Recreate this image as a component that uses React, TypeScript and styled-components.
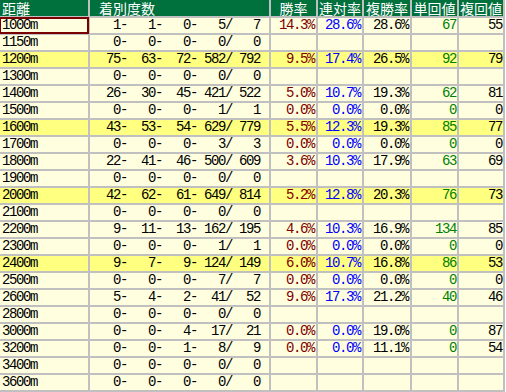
import { Fragment } from "react";
import styled, { createGlobalStyle } from "styled-components";

const GlobalStyle = createGlobalStyle`
  body {
    margin: 0;
    background: #fff;
  }
`;

type Row = {
  dist: string;
  counts: number[];
  rates?: [string, string, string, number, number];
  hl?: boolean;
};

const rows: Row[] = [
  { dist: "1000m", counts: [1, 1, 0, 5, 7], rates: ["14.3%", "28.6%", "28.6%", 67, 55] },
  { dist: "1150m", counts: [0, 0, 0, 0, 0] },
  { dist: "1200m", counts: [75, 63, 72, 582, 792], rates: ["9.5%", "17.4%", "26.5%", 92, 79], hl: true },
  { dist: "1300m", counts: [0, 0, 0, 0, 0] },
  { dist: "1400m", counts: [26, 30, 45, 421, 522], rates: ["5.0%", "10.7%", "19.3%", 62, 81] },
  { dist: "1500m", counts: [0, 0, 0, 1, 1], rates: ["0.0%", "0.0%", "0.0%", 0, 0] },
  { dist: "1600m", counts: [43, 53, 54, 629, 779], rates: ["5.5%", "12.3%", "19.3%", 85, 77], hl: true },
  { dist: "1700m", counts: [0, 0, 0, 3, 3], rates: ["0.0%", "0.0%", "0.0%", 0, 0] },
  { dist: "1800m", counts: [22, 41, 46, 500, 609], rates: ["3.6%", "10.3%", "17.9%", 63, 69] },
  { dist: "1900m", counts: [0, 0, 0, 0, 0] },
  { dist: "2000m", counts: [42, 62, 61, 649, 814], rates: ["5.2%", "12.8%", "20.3%", 76, 73], hl: true },
  { dist: "2100m", counts: [0, 0, 0, 0, 0] },
  { dist: "2200m", counts: [9, 11, 13, 162, 195], rates: ["4.6%", "10.3%", "16.9%", 134, 85] },
  { dist: "2300m", counts: [0, 0, 0, 1, 1], rates: ["0.0%", "0.0%", "0.0%", 0, 0] },
  { dist: "2400m", counts: [9, 7, 9, 124, 149], rates: ["6.0%", "10.7%", "16.8%", 86, 53], hl: true },
  { dist: "2500m", counts: [0, 0, 0, 7, 7], rates: ["0.0%", "0.0%", "0.0%", 0, 0] },
  { dist: "2600m", counts: [5, 4, 2, 41, 52], rates: ["9.6%", "17.3%", "21.2%", 40, 46] },
  { dist: "2800m", counts: [0, 0, 0, 0, 0] },
  { dist: "3000m", counts: [0, 0, 4, 17, 21], rates: ["0.0%", "0.0%", "19.0%", 0, 87] },
  { dist: "3200m", counts: [0, 0, 1, 8, 9], rates: ["0.0%", "0.0%", "11.1%", 0, 54] },
  { dist: "3400m", counts: [0, 0, 0, 0, 0] },
  { dist: "3600m", counts: [0, 0, 0, 0, 0] },
];

const headers = ["距離", "着別度数", "勝率", "連対率", "複勝率", "単回値", "複回値"];
const rateColors = ["#800000", "#0000ff", "#000000", "#008000", "#000000"];

const Table = styled.div`
  display: grid;
  grid-template-columns: 88px 179px 45px 44px 46px 45px 44px;
  grid-template-rows: 16px;
  grid-auto-rows: 15px;
  gap: 2px;
  width: max-content;
  padding: 0 2px 2px 0;
  background: #c0c0c0;
`;

const HeadCell = styled.div<{ $align: string; $pad: number }>`
  background: #00703c;
  color: #fff;
  font-family: "Noto Sans CJK JP", sans-serif;
  font-size: 14px;
  line-height: 16px;
  white-space: nowrap;
  text-align: ${({ $align }) => $align};
  padding-left: ${({ $pad }) => $pad}px;
`;

const Cell = styled.div<{ $hl?: boolean; $color?: string; $align?: string; $pad?: string; $selected?: boolean }>`
  background: ${({ $hl }) => ($hl ? "#ffff80" : "#ffffe0")};
  color: ${({ $color }) => $color || "#000"};
  font-family: "Liberation Mono", monospace;
  font-size: 14px;
  letter-spacing: -1.4px;
  line-height: 15px;
  white-space: pre;
  text-align: ${({ $align }) => $align || "right"};
  padding: ${({ $pad }) => $pad || "0 3px 0 0"};
  ${({ $selected }) => ($selected ? "outline: 2px solid #7a0000; outline-offset: -1px;" : "")}
`;

const pad = (n: number) => String(n).padStart(4, " ");
const formatCounts = (c: number[]) =>
  `${pad(c[0])}-${pad(c[1])}-${pad(c[2])}-${pad(c[3])}/${pad(c[4])}`;

export default function App() {
  return (
    <>
      <GlobalStyle />
      <Table>
        {headers.map((h, i) => (
          <HeadCell key={h} $align={i < 2 ? "left" : "center"} $pad={i === 0 ? 2 : i === 1 ? 9 : 0}>
            {h}
          </HeadCell>
        ))}
        {rows.map((r, ri) => (
          <Fragment key={r.dist}>
            <Cell $hl={r.hl} $align="left" $pad="0 0 0 2px" $selected={ri === 0}>
              {r.dist}
            </Cell>
            <Cell $hl={r.hl} $align="left" $pad="0 0 0 2px">
              {formatCounts(r.counts)}
            </Cell>
            {rateColors.map((col, i) => (
              <Cell key={i} $hl={r.hl} $color={col} $pad={i < 3 ? "0 2px 0 0" : "0 1px 0 0"}>
                {r.rates ? r.rates[i] : ""}
              </Cell>
            ))}
          </Fragment>
        ))}
      </Table>
    </>
  );
}
